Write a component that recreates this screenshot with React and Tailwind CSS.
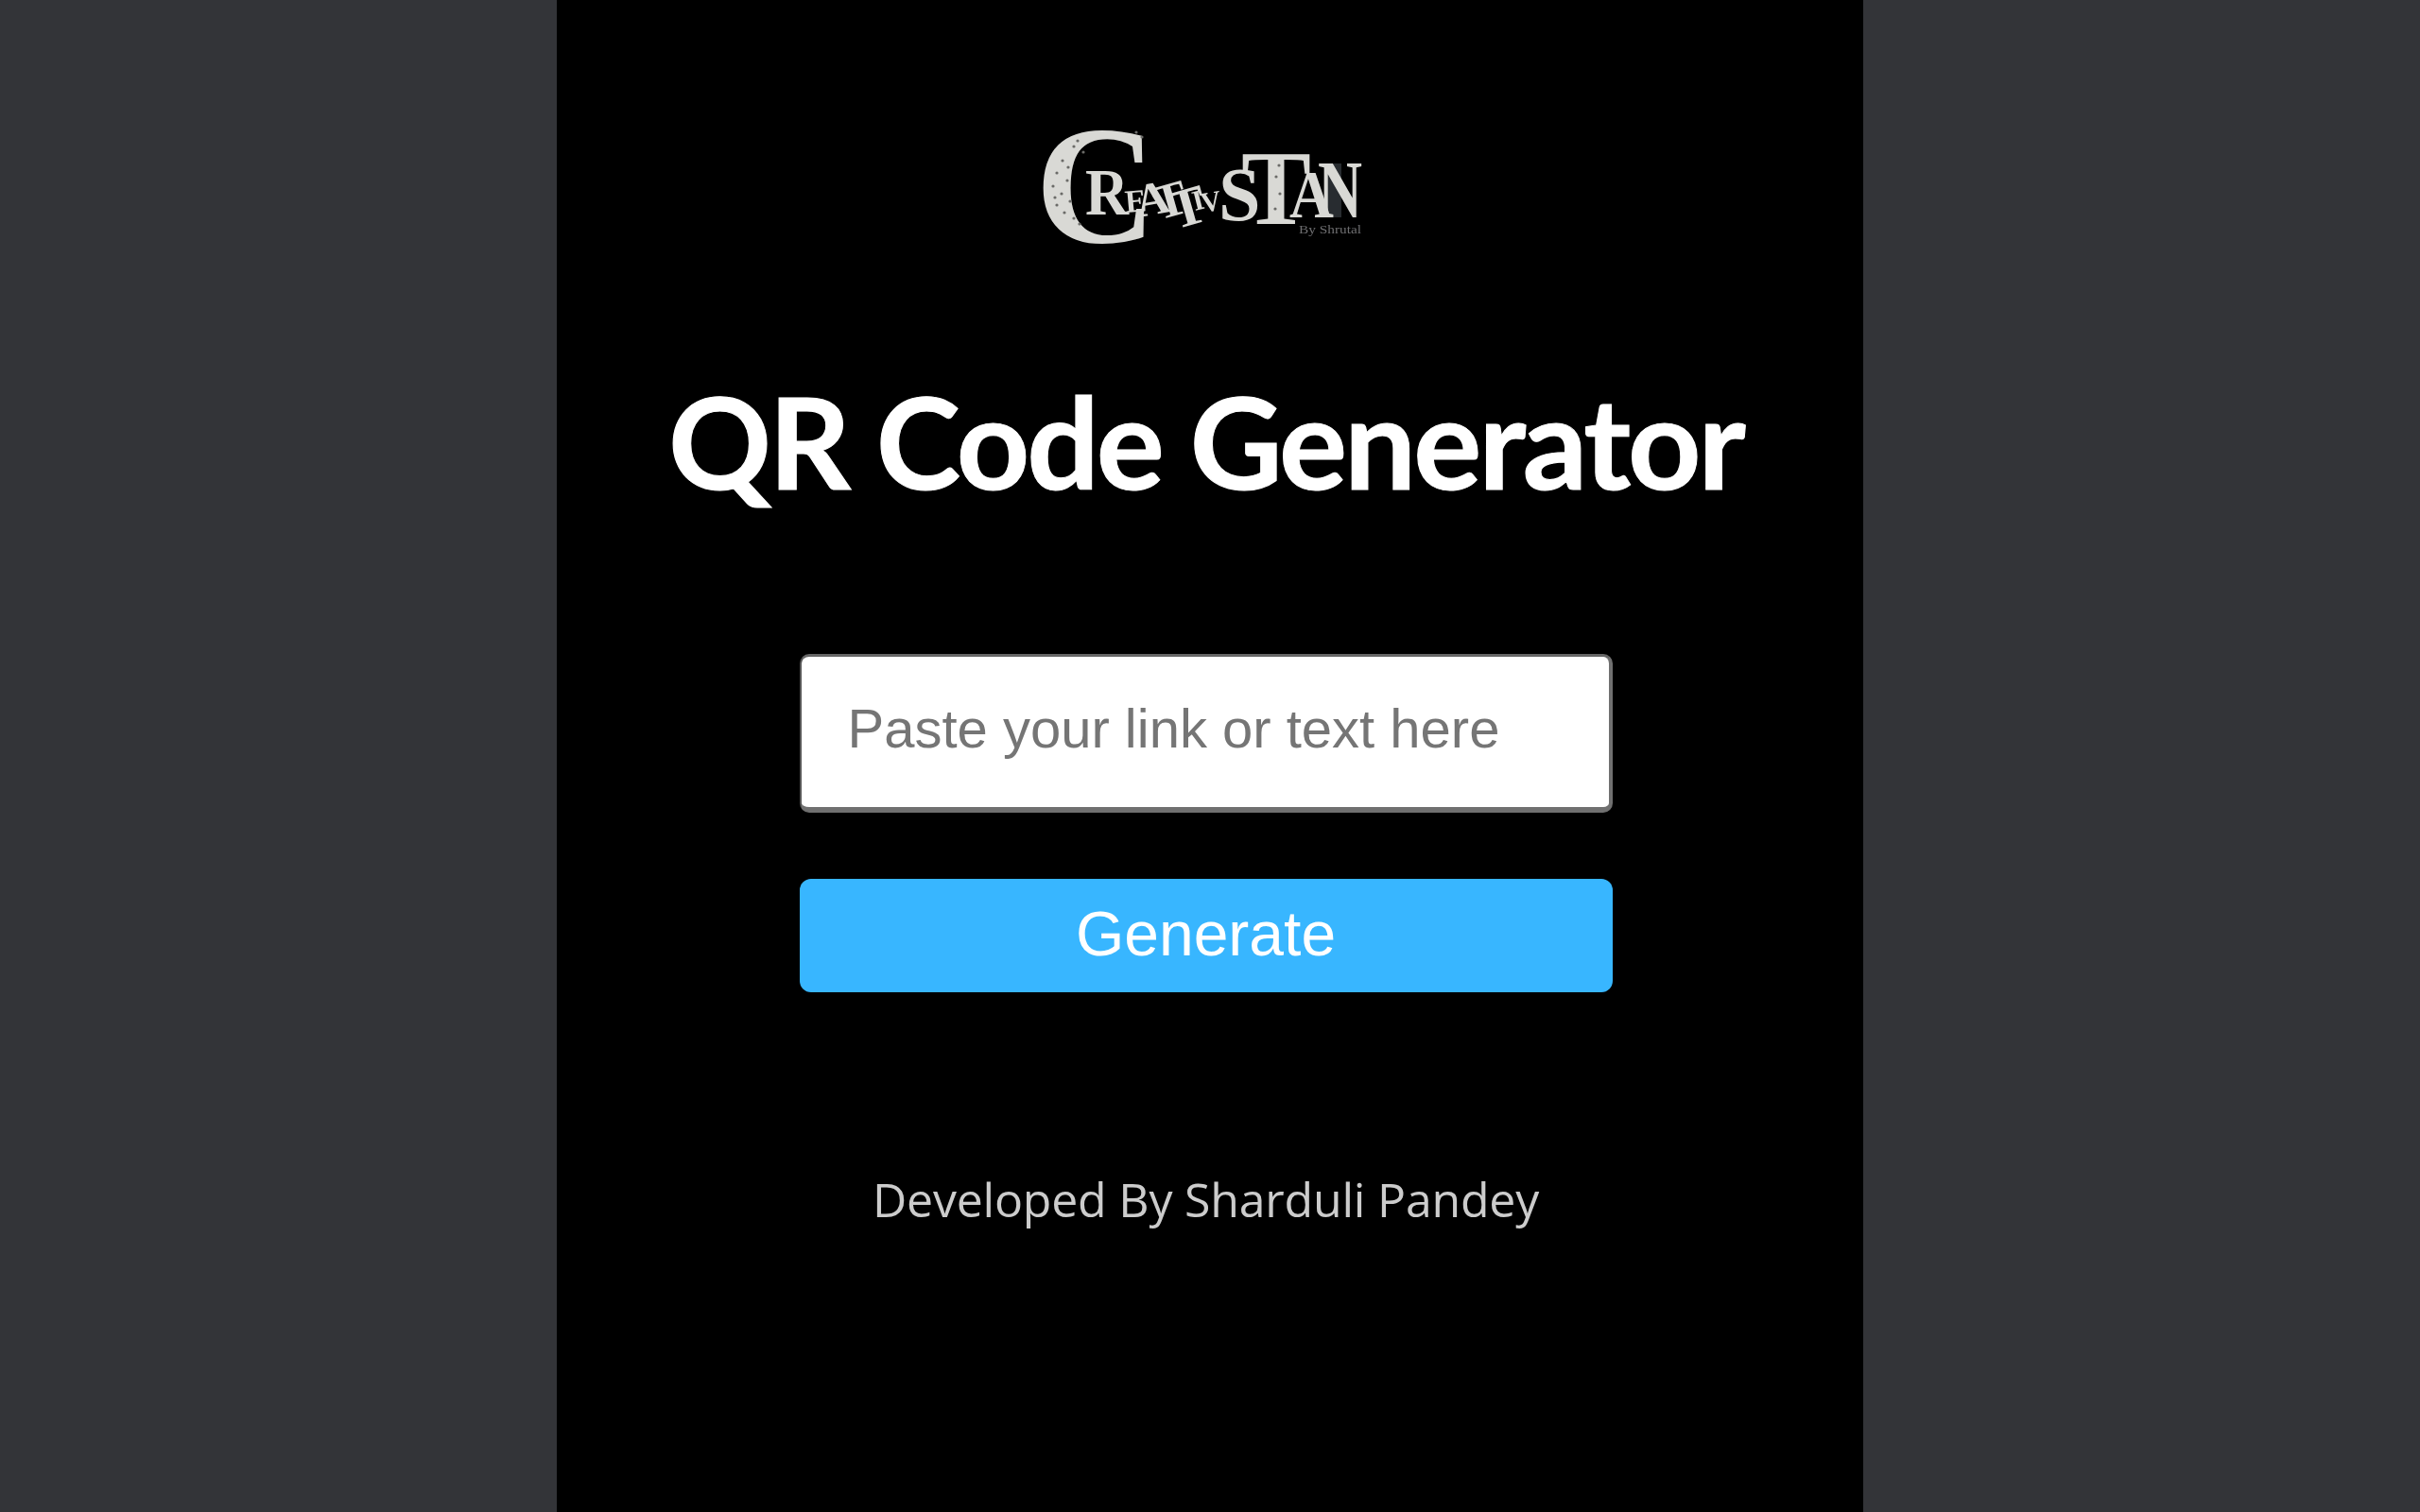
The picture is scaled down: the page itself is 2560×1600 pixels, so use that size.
const specks = [[28,45],[22,58],[33,66],[18,72],[27,80],[36,88],[22,92],[30,100],[40,106],[46,112],[50,36],[40,30],[34,52],[20,84],[44,24],[112,20],[106,15],[254,62],[258,80],[253,96],[257,50]];

function Logo() {
  return (
    <svg width="368" height="170" viewBox="-4 -30 368 170" className="block blur-[0.6px]" fill="#d9d9d5" style={{ fontFamily: '"Liberation Serif", serif' }}>
      <rect x="308" y="48" width="15" height="57" fill="#282c30" />
      <text x="-1" y="131" fontSize="178" fontWeight="700">C</text>
      <text x="52" y="102" fontSize="70" fontWeight="700" textLength="46" lengthAdjust="spacingAndGlyphs">R</text>
      <text x="95" y="100" fontSize="34" fontWeight="700" transform="rotate(-5 95 100)">E</text>
      <text x="108" y="105" fontSize="50" fontWeight="700" transform="rotate(-10 108 105)">A</text>
      <text x="130" y="108" fontSize="52" fontWeight="700" transform="rotate(-16 130 108)">T</text>
      <text x="147" y="118" fontSize="58" fontWeight="700" transform="rotate(-16 147 118)">T</text>
      <text x="168" y="98" fontSize="30" fontWeight="700" transform="rotate(-14 168 98)">I</text>
      <text x="176" y="100" fontSize="30" fontWeight="700" transform="rotate(-10 176 100)">V</text>
      <text x="193" y="108" fontSize="80" fontWeight="700">S</text>
      <text x="217" y="112" fontSize="112" fontWeight="700" textLength="74" lengthAdjust="spacingAndGlyphs">T</text>
      <text x="268" y="105" fontSize="72" fontWeight="700" textLength="46" lengthAdjust="spacingAndGlyphs">A</text>
      <text x="298" y="105" fontSize="86" fontWeight="700" textLength="47" lengthAdjust="spacingAndGlyphs">N</text>
      <text x="278" y="122" fontSize="13" fill="#6e6e70" textLength="66" lengthAdjust="spacingAndGlyphs">By Shrutal</text>
      {specks.map(([x, y], i) => (
        <circle key={i} cx={x} cy={y} r="1.6" fill="#6b6b68" />
      ))}
    </svg>
  );
}

export default function App() {
  return (
    <div className="min-h-[1600px] bg-[#333438] flex justify-center">
      <main className="w-[1382px] h-[1600px] bg-black flex flex-col items-center pr-[9px]">
        <div className="pt-[95px]">
          <Logo />
        </div>
        <h1 className="mt-[111px] text-white font-bold text-[135px] leading-[180px] tracking-[-3px] [-webkit-text-stroke:1px_white] whitespace-nowrap [font-family:'Lato',sans-serif]">
          QR Code Generator
        </h1>
        <div className="mt-[136px] flex flex-col">
          <input
            readOnly
            placeholder="Paste your link or text here"
            className="w-[860px] h-[168px] bg-white rounded-[10px] border-t-[3px] border-l-[2px] border-r-[4px] border-b-[6px] border-t-[#666666] border-l-[#555555] border-r-[#707070] border-b-[#707070] pl-[49px] pr-[20px] pb-[8px] text-[58px] text-black placeholder:text-[#757575] outline-none [font-family:'Liberation_Sans',sans-serif]"
          />
          <button className="mt-[70px] w-[860px] h-[120px] bg-[#38b6ff] rounded-[12px] text-white text-[66px] pb-[4px] [font-family:'Liberation_Sans',sans-serif]">
            Generate
          </button>
        </div>
        <p className="mt-[184px] text-[#cccccc] text-[50px] leading-[70px] tracking-[-0.2px] whitespace-nowrap [font-family:'Open_Sans',sans-serif]">
          Developed By Sharduli Pandey
        </p>
      </main>
    </div>
  );
}
